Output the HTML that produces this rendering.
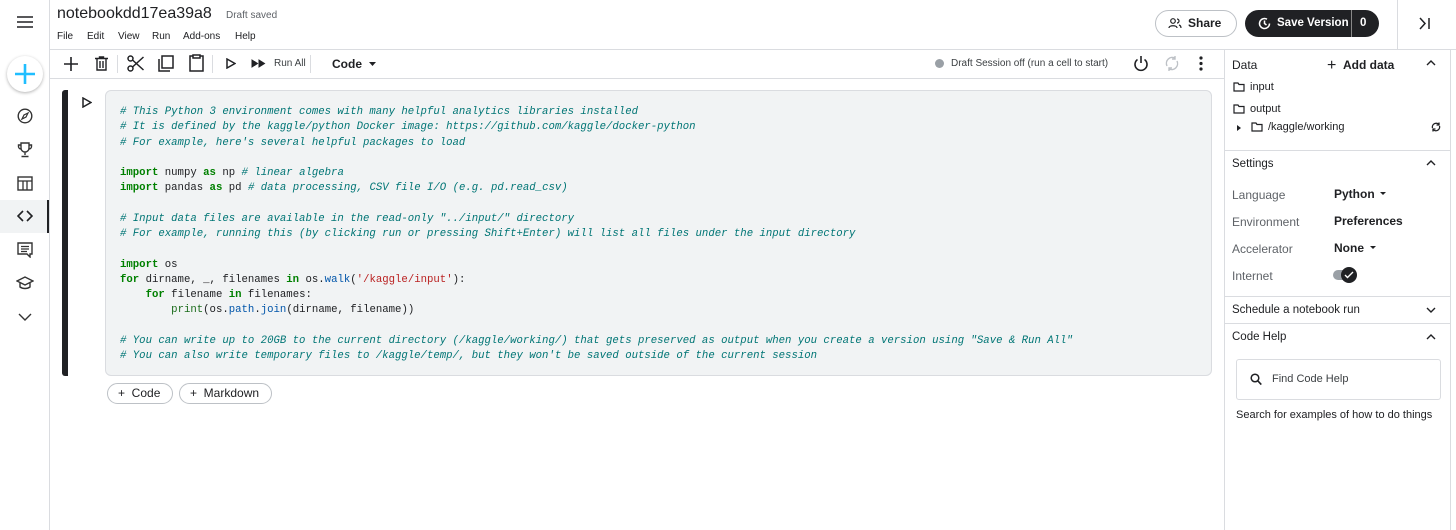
<!DOCTYPE html><html><head><meta charset="utf-8"><style>
*{box-sizing:border-box;margin:0;padding:0}
body{width:1456px;height:530px;overflow:hidden;background:#fff;font-family:"Liberation Sans",sans-serif;color:#202124;position:relative}
.a{position:absolute}
.hl{position:absolute;background:#dadce0}
.code{position:absolute;left:120px;top:105px;font-family:"Liberation Mono",monospace;font-size:10.67px;line-height:15.25px;white-space:pre;color:#202124}
.c{color:#007575;font-style:italic}.k{color:#008000;font-weight:bold}.s{color:#ba2121}.f{color:#0055aa}.b{color:#1a6b1a}
svg{position:absolute}
.btn{position:absolute;border:1px solid #bdc1c6;border-radius:12px;font-size:12px;height:21px;line-height:19px;padding-left:10px}
.rl{font-size:12px;color:#5f6368}.rv{font-size:12px;font-weight:bold}
.m{position:absolute;top:31px;font-size:10px}
</style></head><body>
<div class="hl" style="left:49px;top:0;width:1px;height:530px"></div>
<svg style="left:17px;top:16px" width="16" height="12"><path d="M0 1h16M0 6h16M0 11h16" stroke="#202124" stroke-width="1.6"/></svg>
<div class="a" style="left:7px;top:56px;width:36px;height:36px;border-radius:50%;box-shadow:0 1px 3px rgba(0,0,0,.3);background:#fff"></div>
<svg style="left:13px;top:62px" width="24" height="24"><path d="M12 2v20M2 12h20" stroke="#20beff" stroke-width="2.6"/></svg>
<svg style="left:17px;top:108px" width="16" height="16"><circle cx="8" cy="8" r="6.8" fill="none" stroke="#333" stroke-width="1.4"/><path d="M11 5l-4 2-2 4 4-2z" fill="none" stroke="#333" stroke-width="1.2"/></svg>
<svg style="left:17px;top:141px" width="16" height="17"><path d="M4 2h8v5a4 4 0 0 1-8 0zM4 4H1.5v1.5A2.5 2.5 0 0 0 4 8M12 4h2.5v1.5A2.5 2.5 0 0 1 12 8M8 11v3M4.5 15.5h7" fill="none" stroke="#333" stroke-width="1.4"/></svg>
<svg style="left:17px;top:176px" width="16" height="15"><rect x="1" y="1" width="14" height="13" fill="none" stroke="#333" stroke-width="1.4"/><path d="M1 5h14M6 5v9M10 5v9" stroke="#333" stroke-width="1.3"/></svg>
<div class="a" style="left:0;top:200px;width:48px;height:33px;background:#f1f3f4"></div>
<div class="a" style="left:47px;top:200px;width:2px;height:33px;background:#202124"></div>
<svg style="left:17px;top:209px" width="16" height="14"><path d="M6 2L1 7l5 5M10 2l5 5-5 5" fill="none" stroke="#202124" stroke-width="1.6"/></svg>
<svg style="left:17px;top:242px" width="16" height="16"><path d="M1 1h14v11h-2v3l-3-3H1z" fill="none" stroke="#333" stroke-width="1.4"/><path d="M4 4.5h8M4 7h8M4 9.5h6" stroke="#333" stroke-width="1.2"/></svg>
<svg style="left:16px;top:276px" width="18" height="14"><path d="M1 5l8-4 8 4-8 4zM4 7v4c3 2 7 2 10 0V7" fill="none" stroke="#333" stroke-width="1.4"/></svg>
<svg style="left:18px;top:313px" width="14" height="8"><path d="M1 1l6 6 6-6" fill="none" stroke="#333" stroke-width="1.4"/></svg>
<div class="a" style="left:57px;top:5px;font-size:16px">notebookdd17ea39a8</div>
<div class="a" style="left:226px;top:10px;font-size:10px;color:#5f6368">Draft saved</div>
<div class="m" style="left:57px">File</div><div class="m" style="left:87px">Edit</div><div class="m" style="left:118px">View</div><div class="m" style="left:152px">Run</div><div class="m" style="left:183px">Add-ons</div><div class="m" style="left:235px">Help</div>
<div class="a" style="left:1155px;top:10px;width:82px;height:27px;border:1px solid #bdc1c6;border-radius:14px;font-size:12px;font-weight:bold;line-height:25px;padding-left:32px">Share</div>
<svg style="left:1168px;top:18px" width="14" height="11"><circle cx="5" cy="3" r="2.3" fill="none" stroke="#202124" stroke-width="1.2"/><path d="M1 10c0-3 8-3 8 0M9 1a2 2 0 0 1 0 4M11 7c1.5.5 2 1.5 2 3" fill="none" stroke="#202124" stroke-width="1.2"/></svg>
<div class="a" style="left:1245px;top:10px;width:134px;height:27px;background:#202124;border-radius:14px;color:#fff;font-size:11.5px;font-weight:bold;line-height:27px"><span style="position:absolute;left:32px">Save Version</span><span style="position:absolute;left:106px;top:0;width:1px;height:27px;background:#888"></span><span style="position:absolute;left:115px">0</span></div>
<svg style="left:1258px;top:17px" width="13" height="13"><path d="M11.5 6.5A5 5 0 1 1 9 2.2M6.5 3.5v3l2 1.5" fill="none" stroke="#fff" stroke-width="1.5"/></svg>
<div class="hl" style="left:1397px;top:0;width:1px;height:50px"></div>
<svg style="left:1419px;top:17px" width="12" height="13"><path d="M1 1l5 5.5L1 12M10 1v11" fill="none" stroke="#202124" stroke-width="1.5"/></svg>
<div class="hl" style="left:50px;top:49px;width:1406px;height:1px"></div>
<svg style="left:64px;top:57px" width="14" height="14"><path d="M7 0v14M0 7h14" stroke="#202124" stroke-width="1.6"/></svg>
<svg style="left:95px;top:56px" width="13" height="15"><path d="M0 2.5h13M4.5 2.5V1h4v1.5M2 2.5v11.5h9V2.5M5 5v7M8 5v7" fill="none" stroke="#202124" stroke-width="1.4"/></svg>
<div class="hl" style="left:117px;top:55px;width:1px;height:18px"></div>
<svg style="left:127px;top:55px" width="17" height="17"><circle cx="3.5" cy="3.5" r="2.5" fill="none" stroke="#202124" stroke-width="1.5"/><circle cx="3.5" cy="13.5" r="2.5" fill="none" stroke="#202124" stroke-width="1.5"/><path d="M5.5 5l11 10M5.5 12l11-10" stroke="#202124" stroke-width="1.5"/></svg>
<svg style="left:158px;top:55px" width="16" height="17"><path d="M4 1h11v12H4z M1 4v12h11" fill="none" stroke="#202124" stroke-width="1.5"/></svg>
<svg style="left:189px;top:54px" width="15" height="18"><path d="M4 2H1v15h13V2h-3M4 1h7v3H4z" fill="none" stroke="#202124" stroke-width="1.5"/></svg>
<div class="hl" style="left:212px;top:55px;width:1px;height:18px"></div>
<svg style="left:226px;top:58px" width="10" height="11"><path d="M1 1l8 4.5L1 10z" fill="none" stroke="#202124" stroke-width="1.5"/></svg>
<svg style="left:251px;top:59px" width="15" height="9"><path d="M1 1l5.5 3.5L1 8zM8 1l5.5 3.5L8 8z" fill="#202124" stroke="#202124" stroke-width="1"/></svg>
<div class="a" style="left:274px;top:58px;font-size:10px;color:#3c4043">Run All</div>
<div class="hl" style="left:310px;top:55px;width:1px;height:18px"></div>
<div class="a" style="left:332px;top:57px;font-size:12px;font-weight:bold">Code</div>
<svg style="left:369px;top:62px" width="7" height="4"><path d="M0 0h7L3.5 4z" fill="#202124"/></svg>
<div class="a" style="left:935px;top:59px;width:9px;height:9px;border-radius:50%;background:#9aa0a6"></div>
<div class="a" style="left:951px;top:58px;font-size:10px;color:#3c4043">Draft Session off (run a cell to start)</div>
<svg style="left:1133px;top:55px" width="16" height="17"><path d="M8 1v7M4.5 4.5a6 6 0 1 0 7 0" fill="none" stroke="#202124" stroke-width="1.6"/></svg>
<svg style="left:1164px;top:55px" width="16" height="17"><path d="M3 11A6 6 0 0 1 11 3M13 6a6 6 0 0 1-8 8M11 1v3H8M5 16v-3h3" fill="none" stroke="#bdc1c6" stroke-width="1.4"/></svg>
<svg style="left:1199px;top:56px" width="4" height="15"><circle cx="2" cy="2" r="1.6" fill="#202124"/><circle cx="2" cy="7.5" r="1.6" fill="#202124"/><circle cx="2" cy="13" r="1.6" fill="#202124"/></svg>
<div class="hl" style="left:50px;top:78px;width:1174px;height:1px"></div>
<div class="a" style="left:62px;top:90px;width:6px;height:286px;background:#202124;border-radius:3px 0 0 3px"></div>
<svg style="left:82px;top:97px" width="10" height="11"><path d="M1 1l8 4.5L1 10z" fill="none" stroke="#202124" stroke-width="1.5"/></svg>
<div class="a" style="left:105px;top:90px;width:1107px;height:286px;background:#f1f3f4;border:1px solid #dadce0;border-radius:6px"></div>
<div class="code"><span class="c"># This Python 3 environment comes with many helpful analytics libraries installed</span>
<span class="c"># It is defined by the kaggle/python Docker image: https://github.com/kaggle/docker-python</span>
<span class="c"># For example, here's several helpful packages to load</span>

<span class="k">import</span> numpy <span class="k">as</span> np <span class="c"># linear algebra</span>
<span class="k">import</span> pandas <span class="k">as</span> pd <span class="c"># data processing, CSV file I/O (e.g. pd.read_csv)</span>

<span class="c"># Input data files are available in the read-only "../input/" directory</span>
<span class="c"># For example, running this (by clicking run or pressing Shift+Enter) will list all files under the input directory</span>

<span class="k">import</span> os
<span class="k">for</span> dirname, _, filenames <span class="k">in</span> os.<span class="f">walk</span>(<span class="s">'/kaggle/input'</span>):
    <span class="k">for</span> filename <span class="k">in</span> filenames:
        <span class="b">print</span>(os.<span class="f">path</span>.<span class="f">join</span>(dirname, filename))

<span class="c"># You can write up to 20GB to the current directory (/kaggle/working/) that gets preserved as output when you create a version using "Save &amp; Run All" </span>
<span class="c"># You can also write temporary files to /kaggle/temp/, but they won't be saved outside of the current session</span></div>
<div class="btn" style="left:107px;top:383px;width:66px">+&nbsp; Code</div>
<div class="btn" style="left:179px;top:383px;width:93px">+&nbsp; Markdown</div>
<div class="hl" style="left:1224px;top:50px;width:1px;height:480px"></div>
<div class="hl" style="left:1450px;top:50px;width:1px;height:480px"></div>
<div class="a" style="left:1232px;top:58px;font-size:12px">Data</div>
<div class="a" style="left:1327px;top:56px;font-size:12px;font-weight:bold"><span style="font-size:16px;font-weight:normal;position:relative;top:1px">+</span>&nbsp;&nbsp;Add data</div>
<svg style="left:1426px;top:60px" width="10" height="6"><path d="M1 5l4-4 4 4" fill="none" stroke="#202124" stroke-width="1.4"/></svg>
<svg style="left:1233px;top:82px" width="12" height="10"><path d="M1 1h4l1 1.5h5V9H1z" fill="none" stroke="#202124" stroke-width="1.2"/></svg>
<div class="a" style="left:1250px;top:81px;font-size:11px">input</div>
<svg style="left:1233px;top:104px" width="12" height="10"><path d="M1 1h4l1 1.5h5V9H1z" fill="none" stroke="#202124" stroke-width="1.2"/></svg>
<div class="a" style="left:1250px;top:103px;font-size:11px">output</div>
<svg style="left:1237px;top:125px" width="4" height="6"><path d="M0 0l4 3-4 3z" fill="#202124"/></svg>
<svg style="left:1251px;top:122px" width="12" height="10"><path d="M1 1h4l1 1.5h5V9H1z" fill="none" stroke="#202124" stroke-width="1.2"/></svg>
<div class="a" style="left:1268px;top:121px;font-size:11px">/kaggle/working</div>
<svg style="left:1431px;top:122px" width="10" height="10"><path d="M1.5 6A3.8 3.8 0 0 1 8 2.5M8.5 4A3.8 3.8 0 0 1 2 7.5M8 0.5v2.5H5.5M2 9.5V7h2.5" fill="none" stroke="#202124" stroke-width="1.3"/></svg>
<div class="hl" style="left:1225px;top:150px;width:225px;height:1px"></div>
<div class="a" style="left:1232px;top:158px;font-size:11.5px">Settings</div>
<svg style="left:1426px;top:160px" width="10" height="6"><path d="M1 5l4-4 4 4" fill="none" stroke="#202124" stroke-width="1.4"/></svg>
<div class="a rl" style="left:1232px;top:188px">Language</div><div class="a rv" style="left:1334px;top:187px">Python</div>
<svg style="left:1380px;top:192px" width="6" height="3"><path d="M0 0h6L3 3z" fill="#202124"/></svg>
<div class="a rl" style="left:1232px;top:215px">Environment</div><div class="a rv" style="left:1334px;top:214px">Preferences</div>
<div class="a rl" style="left:1232px;top:242px">Accelerator</div><div class="a rv" style="left:1334px;top:241px">None</div>
<svg style="left:1370px;top:246px" width="6" height="3"><path d="M0 0h6L3 3z" fill="#202124"/></svg>
<div class="a rl" style="left:1232px;top:269px">Internet</div>
<div class="a" style="left:1333px;top:270px;width:22px;height:10px;border-radius:5px;background:#9aa0a6"></div>
<div class="a" style="left:1341px;top:267px;width:16px;height:16px;border-radius:50%;background:#202124"></div>
<svg style="left:1344px;top:271px" width="10" height="8"><path d="M1 4l2.5 2.5L9 1" fill="none" stroke="#fff" stroke-width="1.4"/></svg>
<div class="hl" style="left:1225px;top:296px;width:225px;height:1px"></div>
<div class="a" style="left:1232px;top:304px;font-size:11.5px">Schedule a notebook run</div>
<svg style="left:1426px;top:307px" width="10" height="6"><path d="M1 1l4 4 4-4" fill="none" stroke="#202124" stroke-width="1.4"/></svg>
<div class="hl" style="left:1225px;top:323px;width:225px;height:1px"></div>
<div class="a" style="left:1232px;top:331px;font-size:11.5px">Code Help</div>
<svg style="left:1426px;top:334px" width="10" height="6"><path d="M1 5l4-4 4 4" fill="none" stroke="#202124" stroke-width="1.4"/></svg>
<div class="a" style="left:1236px;top:359px;width:205px;height:41px;border:1px solid #dadce0;border-radius:3px"></div>
<svg style="left:1250px;top:373px" width="12" height="13"><circle cx="5" cy="5" r="3.8" fill="none" stroke="#202124" stroke-width="1.5"/><path d="M7.8 7.8l3.5 3.8" stroke="#202124" stroke-width="1.6"/></svg>
<div class="a" style="left:1272px;top:373px;font-size:11px;color:#3c4043">Find Code Help</div>
<div class="a" style="left:1236px;top:409px;font-size:11px">Search for examples of how to do things</div>
</body></html>
